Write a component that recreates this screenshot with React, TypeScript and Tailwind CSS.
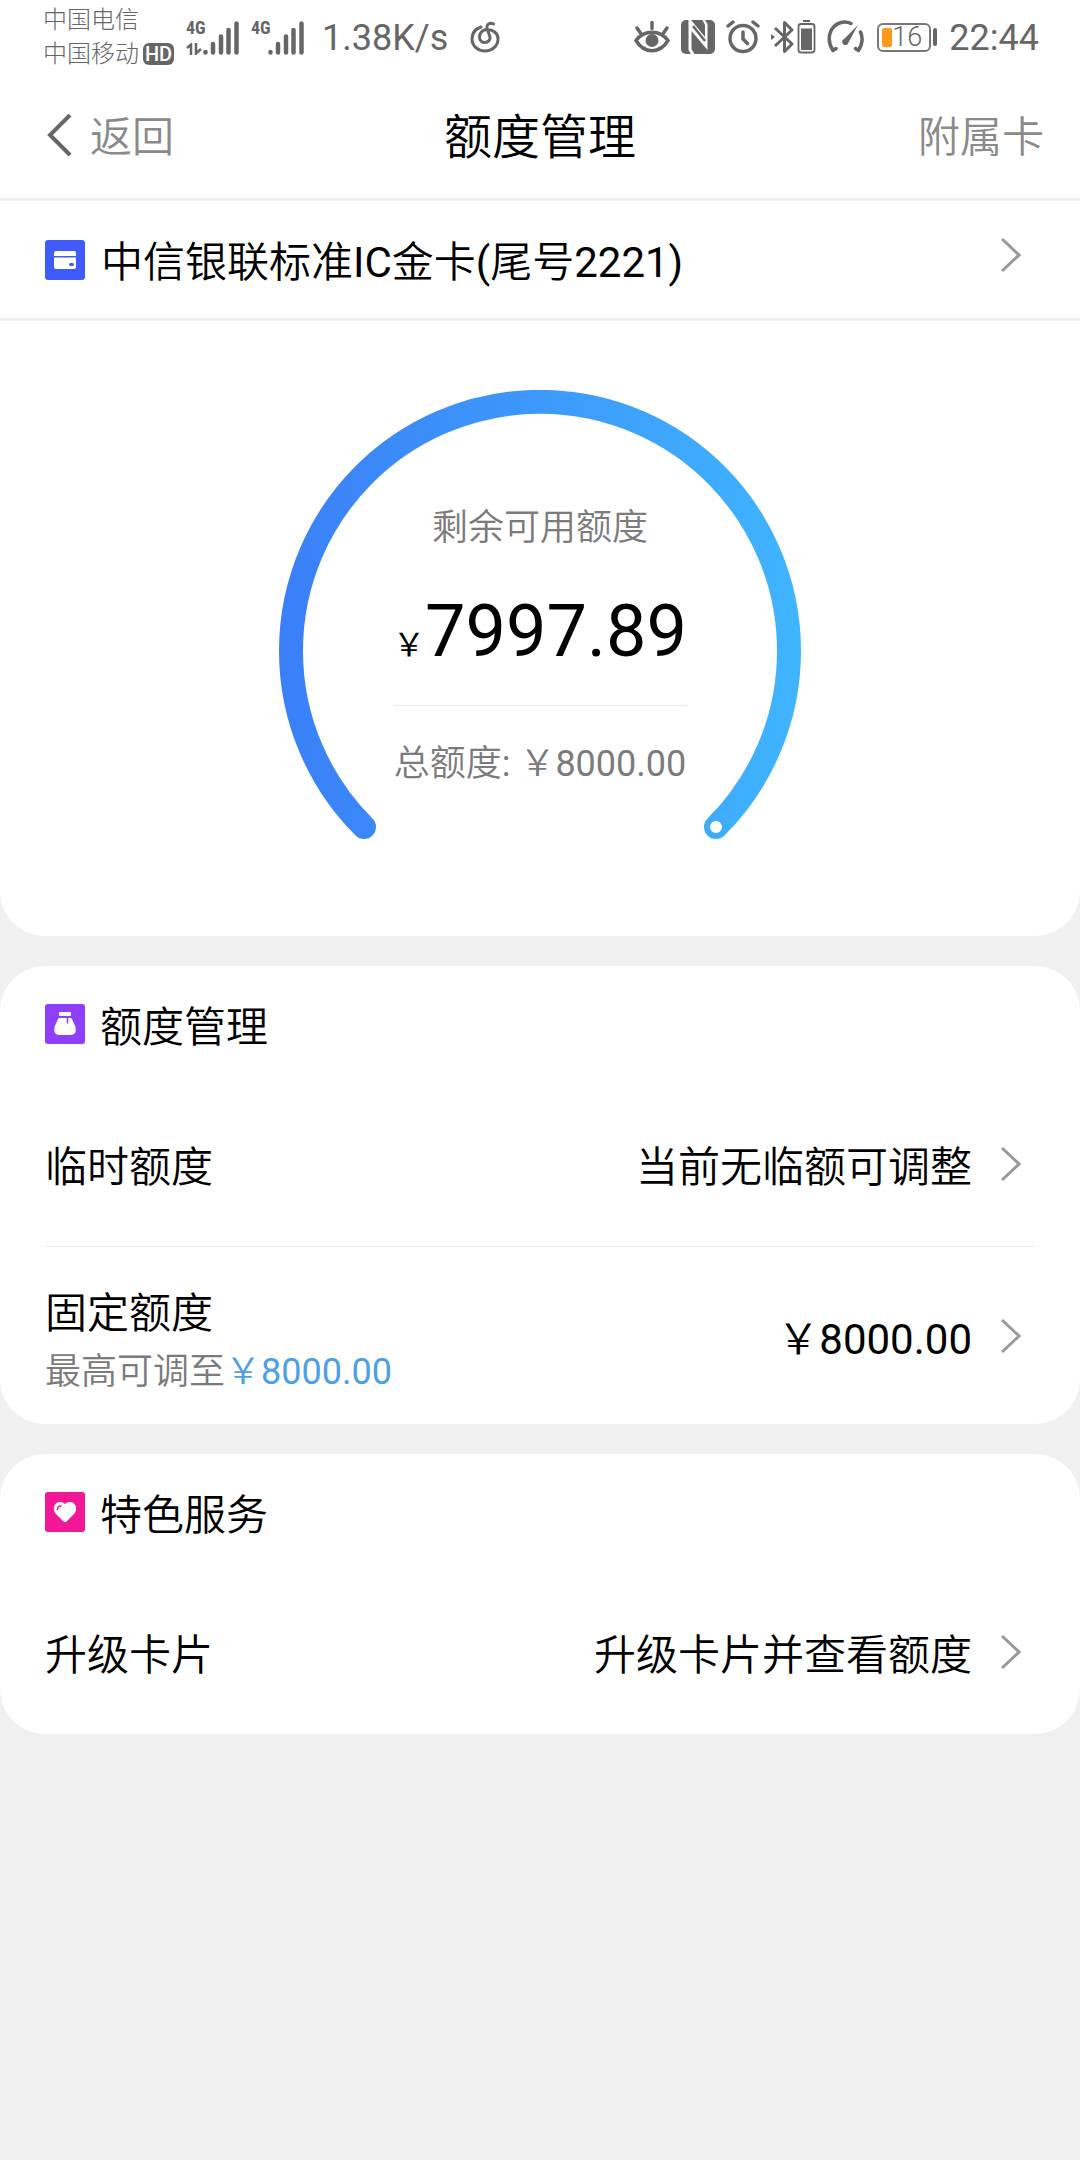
import type { ReactNode } from 'react';

interface LimitRowProps {
  label: string;
  value: string;
  note?: string;
  noteAmount?: string;
}

const account = {
  cardName: '中信银联标准IC金卡(尾号2221)',
  available: '7997.89',
  total: '￥8000.00',
};

export default function App() {
  return (
    <div className="min-h-screen bg-[#f0f0f0] font-['Roboto','Noto_Sans_CJK_SC',sans-serif] font-[350] text-black">
      <div className="bg-white rounded-b-[45px]">
        <StatusBar />
        <NavBar />

        {/* Card picker */}
        <button className="w-full h-[120px] pl-[45px] pr-[59px] flex items-center border-b-3 border-[#eeeeee] text-left">
          <CardIcon />
          <span className="ml-4 pt-1.5 grow text-[42px] leading-[60px]">
            <MixedText text={account.cardName} />
          </span>
          <span className="pb-2.5">
            <Chevron />
          </span>
        </button>

        <LimitGauge />
      </div>

      <Section title="额度管理" icon={<PurseIcon />}>
        <LimitRow label="临时额度" value="当前无临额可调整" />
        <div className="mx-[45px] h-px bg-[#ebebeb]" />
        <LimitRow label="固定额度" value="￥8000.00" note="最高可调至" noteAmount="￥8000.00" />
      </Section>

      <Section title="特色服务" icon={<HeartIcon />}>
        <LimitRow label="升级卡片" value="升级卡片并查看额度" />
      </Section>
    </div>
  );
}

// Roboto's light cut is too thin next to Chinese text, so latin runs use the regular weight
function MixedText({ text }: { text: string }) {
  return text.split(/([\x20-\x7e]+)/).map((part, i) => (
    <span key={i} className={i % 2 ? 'font-normal' : ''}>{part}</span>
  ));
}

function StatusBar() {
  return (
    <div className="h-[74px] pl-[43px] pr-[41px] flex items-center justify-between text-[#666666]">
      <div className="flex items-center">
        <div className="text-2xl leading-[34px] font-light">
          <div>中国电信</div>
          <div className="flex items-center gap-1">
            中国移动
            <span className="h-[22px] w-[31px] rounded-md bg-[#666666] text-white text-xl leading-[22px] font-medium text-center">HD</span>
          </div>
        </div>
        <div className="ml-3 flex items-center gap-3">
          <Signal arrows />
          <Signal />
        </div>
        <span className="ml-[18px] pt-0.5 text-4xl font-normal">1.38K/s</span>
        <MusicIcon />
      </div>

      <div className="flex items-center">
        <div className="flex items-center gap-[11px]">
          <EyeIcon />
          <NfcIcon />
          <AlarmIcon />
          <BluetoothIcon />
          <SpeedIcon />
        </div>
        {/* Battery */}
        <div className="ml-3 w-[54px] h-[29px] p-[3px] flex items-center rounded-md border-2 border-[#777777]">
          <div className="w-[10px] h-full rounded-xs bg-[#fb9a1c]" />
          <span className="text-[27px] leading-[27px]">16</span>
        </div>
        <div className="ml-0.5 w-1 h-[18px] rounded-sm bg-[#666666]" />
        <span className="ml-3 pt-0.5 text-4xl font-normal">22:44</span>
      </div>
    </div>
  );
}

function NavBar() {
  return (
    <header className="h-[127px] px-9 grid grid-cols-[1fr_auto_1fr] items-center border-b-3 border-[#eeeeee]">
      <button className="pl-[9px] flex items-center gap-[17px] text-[42px] text-[#8a8a8a]">
        <svg className="w-7 h-11" viewBox="0 0 28 44" fill="none" stroke="#666666" strokeWidth="4">
          <path d="M25 1 L5 21 L25 41" />
        </svg>
        <span className="pt-0.5">返回</span>
      </button>
      <h1 className="pt-1 text-5xl">额度管理</h1>
      <a href="#supplementary" className="pt-0.5 justify-self-end text-[42px] text-[#8a8a8a]">附属卡</a>
    </header>
  );
}

function LimitGauge() {
  return (
    <div className="pt-[69px] pb-[97px] flex justify-center">
      <div className="relative w-[522px] h-[449px]">
        <svg className="w-full h-full" viewBox="0 0 522 449" fill="none">
          <defs>
            <linearGradient id="gauge" gradientUnits="userSpaceOnUse" x1="0" y1="261" x2="522" y2="261">
              <stop offset="0" stopColor="#3a7ff8" />
              <stop offset="0.5" stopColor="#3d99fb" />
              <stop offset="1" stopColor="#3fb5ff" />
            </linearGradient>
          </defs>
          <path d="M85 437 A249 249 0 1 1 437 437" stroke="url(#gauge)" strokeWidth="24" strokeLinecap="round" />
          <circle cx="437" cy="437" r="6" fill="#ffffff" />
        </svg>
        <div className="absolute inset-x-0 top-28 flex flex-col items-center text-4xl text-[#7b7b7b]">
          <p className="leading-[52px]">剩余可用额度</p>
          <p className="mt-9 flex items-baseline font-normal text-black">
            <span className="text-[32px] leading-[84px]">￥</span>
            <span className="text-7xl leading-[84px]">{account.available}</span>
          </p>
          <div className="mt-[18px] w-[293px] h-px bg-[#ebebeb]" />
          <p className="mt-8 leading-[52px]">
            <MixedText text={`总额度: ${account.total}`} />
          </p>
        </div>
      </div>
    </div>
  );
}

function Section({ title, icon, children }: { title: string; icon: ReactNode; children: ReactNode }) {
  return (
    <section className="mt-[30px] bg-white rounded-[45px]">
      <div className="h-[116px] pl-[45px] flex items-center gap-[15px]">
        {icon}
        <h2 className="pt-2 text-[42px] leading-[60px]">{title}</h2>
      </div>
      {children}
    </section>
  );
}

function LimitRow({ label, value, note, noteAmount }: LimitRowProps) {
  return (
    <button className={`w-full pl-[45px] pr-[59px] flex items-center text-left text-[42px] leading-[60px] ${note ? 'h-[177px]' : 'h-[164px]'}`}>
      <span className={note ? 'grow pt-3' : 'grow pt-2'}>
        <span className="block">{label}</span>
        {note && (
          <span className="block text-4xl leading-[56px] text-[#7b7b7b]">
            {note}
            <span className="text-[#4d9fe6]">
              <MixedText text={noteAmount ?? ''} />
            </span>
          </span>
        )}
      </span>
      <span className="mr-[29px] pt-2">
        <MixedText text={value} />
      </span>
      <Chevron />
    </button>
  );
}

function Chevron() {
  return (
    <svg className="w-5 h-9 shrink-0" viewBox="0 0 20 36" fill="none" stroke="#999999" strokeWidth="3">
      <path d="M1 2 L18 18 L1 34" />
    </svg>
  );
}

function CardIcon() {
  return (
    <svg className="w-10 h-10 shrink-0" viewBox="0 0 40 40">
      <rect width="40" height="40" rx="3" fill="#3f5cfb" />
      <path d="M9 16v-3q0-2 2-2h18q2 0 2 2v3z" fill="#fff" />
      <path d="M9 17.500h22V27q0 2-2 2H11q-2 0-2-2z" fill="#fff" />
      <rect x="24" y="23" width="5" height="3" rx="1.500" fill="#3f5cfb" />
    </svg>
  );
}

function PurseIcon() {
  return (
    <svg className="w-10 h-10 shrink-0" viewBox="0 0 40 40">
      <rect width="40" height="40" rx="3" fill="#8e3ffb" />
      <rect x="14" y="8" width="12" height="4" rx="1" fill="#fff" />
      <path d="M14.500 14h11q1 0 1.500 1l3.500 8q1.500 8-5 8h-11q-6.500 0-5-8l3.500-8q.5-1 1.500-1z" fill="#fff" />
      <path d="M22.500 13.500v6" stroke="#8e3ffb" strokeWidth="1.500" />
    </svg>
  );
}

function HeartIcon() {
  return (
    <svg className="w-10 h-10 shrink-0" viewBox="0 0 40 40">
      <rect width="40" height="40" rx="3" fill="#f21796" />
      <path d="M18.500 29.500 10.500 21.500C7.500 18 8.500 10 15 10q3 0 5 2 2-2 5-2c6.500 0 7.500 8 4.500 11.500l-8 8q-1.500 1.500-3 0z" fill="#fff" />
      <path d="M12.500 17.500q0-3.500 3.500-3.500" fill="none" stroke="#f21796" strokeWidth="1.500" strokeLinecap="round" />
    </svg>
  );
}

function Signal({ arrows }: { arrows?: boolean }) {
  return (
    <div className="flex items-end h-9">
      <div className="w-[17px] h-9 flex flex-col justify-between">
        <span className="font-['Liberation_Sans_Narrow','Roboto_Condensed','Roboto'] text-lg leading-[18px] font-bold">4G</span>
        {arrows && (
          <svg className="w-4 h-3" viewBox="0 0 16 12" fill="none" stroke="#666666" strokeWidth="2.500">
            <path d="M1 5 5 1.500V12M10 0v10.500L15 6" />
          </svg>
        )}
      </div>
      <svg className="w-9 h-[34px]" viewBox="0 0 36 34" stroke="#666666" strokeWidth="4.500" strokeLinecap="round">
        <path d="M2.500 31v.5M10 23v8.500M18 15.500v16M25.500 9v22.500M33.500 2.500v29" />
      </svg>
    </div>
  );
}

function MusicIcon() {
  return (
    <svg className="ml-[22px] w-[30px] h-8" viewBox="0 0 30 32" fill="none" stroke="#666666" strokeWidth="3" strokeLinecap="round">
      <path d="M11 6C5 8 2 12 2 18c0 7 6 12 13 12s13-5 13-12c0-6-5-9.500-11-9.500-5 0-7.500 4-7.500 7.500 0 3.500 2.500 5.500 5.500 5.500s5.500-2.500 5-5.500L17 7c-.5-4 3-6 6.500-4" />
    </svg>
  );
}

function EyeIcon() {
  return (
    <svg className="w-9 h-[34px]" viewBox="0 0 36 34" fill="none" stroke="#666666" strokeWidth="3.500" strokeLinecap="round">
      <path d="M2 20.500C10 9.500 26 9.500 34 20.500 26 34 10 34 2 20.500z" />
      <circle cx="18" cy="20.500" r="6.500" fill="#666666" stroke="none" />
      <path d="M18 2.500v6M3 8l3.500 5M33 8l-3.500 5" />
    </svg>
  );
}

function NfcIcon() {
  return (
    <svg className="w-[34px] h-[34px]" viewBox="0 0 34 34">
      <rect width="34" height="34" rx="5" fill="#666666" />
      <path d="M7.500 0H10L24 17V5l-2.500-5H24l2.500 4v26L10.500 11v18l3 5H10L7.500 30z" fill="#fff" />
      <path d="M12 6 24 21" stroke="#666666" strokeWidth="2.500" />
    </svg>
  );
}

function AlarmIcon() {
  return (
    <svg className="w-[34px] h-[34px]" viewBox="0 0 34 34" fill="none" stroke="#666666" strokeWidth="3.500" strokeLinecap="round">
      <circle cx="17" cy="18.500" r="13" />
      <path d="M17 12v7l4.500 4.500M2 6l5-4M32 6l-5-4" />
    </svg>
  );
}

// Bluetooth mark with the headset battery next to it
function BluetoothIcon() {
  return (
    <svg className="w-[45px] h-[34px]" viewBox="0 0 45 34" fill="none" stroke="#666666" strokeWidth="3">
      <path d="M4 8l17 16-7.500 7.500V2.500L21 10 4 26" strokeLinejoin="round" />
      <path d="M0 14l4 3-4 3z" fill="#666666" stroke="none" />
      <rect x="27.500" y="4" width="16" height="28.500" rx="2.500" strokeWidth="1.800" />
      <rect x="30" y="8.500" width="11" height="21.500" fill="#666666" stroke="none" />
      <path d="M32 1h7" strokeWidth="2" />
    </svg>
  );
}

function SpeedIcon() {
  return (
    <svg className="w-[38px] h-[34px]" viewBox="0 0 38 34" fill="none" stroke="#666666" strokeWidth="3.500">
      <path d="M9 28.500l-3 2C-1 20 2 6 14 2.500q5-1.500 10 1M33.500 12q4 9-2 18.500l-3-2" strokeLinejoin="round" strokeLinecap="round" />
      <path d="M31 5 21.500 22.500a3.200 3.200 0 1 1-4.500-3.500z" fill="#666666" stroke="none" />
    </svg>
  );
}
